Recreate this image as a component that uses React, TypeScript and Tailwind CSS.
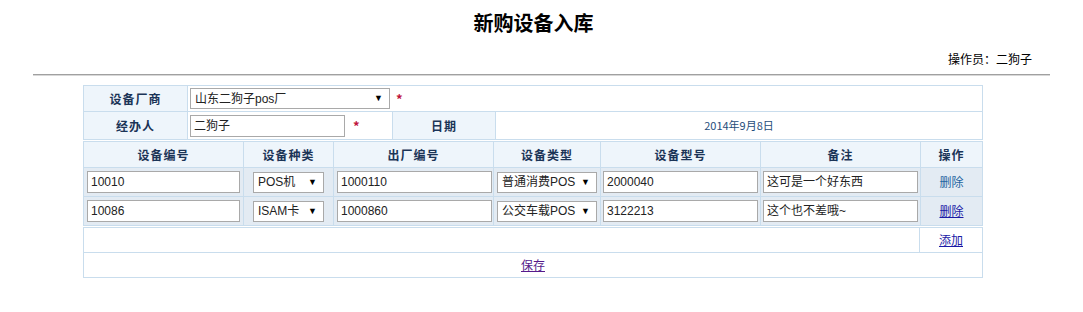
import React from "react";

const font = { fontFamily: '"Noto Sans CJK SC", "Liberation Sans", sans-serif' };
const inputFont = { fontFamily: '"Liberation Sans", "Noto Sans CJK SC", sans-serif' };

const rows = [
  { no: "10010", kind: "POS机", factory: "1000110", type: "普通消费POS", model: "2000040", note: "这可是一个好东西", visited: false },
  { no: "10086", kind: "ISAM卡", factory: "1000860", type: "公交车载POS", model: "3122213", note: "这个也不差哦~", visited: true },
];

function Caret() {
  return <span className="text-[9px] leading-none text-black">▼</span>;
}

function FakeSelect({ value, w }: { value: string; w: string }) {
  return (
    <div
      className={`${w} h-[21px] border border-[#a9a9a9] bg-white flex items-center justify-between pl-[4px] pr-[6px] text-[12px] text-[#222]`}
      style={inputFont}
    >
      <span>{value}</span>
      <Caret />
    </div>
  );
}

function Field({ value, w }: { value: string; w: string }) {
  return (
    <div
      className={`${w} h-[22px] border border-[#a9a9a9] bg-white flex items-center px-[3px] text-[12px] text-[#222]`}
      style={inputFont}
    >
      {value}
    </div>
  );
}

function Star() {
  return <span className="text-[#c0143c] text-[13px] font-bold leading-none">*</span>;
}

const th = "bg-[#eef5fb] flex items-center justify-center text-[12px] font-bold text-[#1b3457] tracking-[1px]";

export default function App() {
  return (
    <div className="w-[1083px] h-[312px] bg-white text-black" style={font}>
      <div className="pt-[9px] pr-[16px] text-center text-[20px] font-bold leading-[28px]">新购设备入库</div>
      <div className="mt-[14px] pr-[51px] text-right text-[12px] leading-[16px]">操作员：二狗子</div>
      <div className="mx-[33px] mt-[7px] h-[2px] bg-[#a0a0a0] border-b border-[#d8d8d8]" />

      <div className="mx-[83px] mt-[9px] w-[900px]">
        {/* top info */}
        <div className="grid grid-cols-[103px_204px_102px_1fr] gap-px bg-[#c9dded] border border-[#c9dded]">
          <div className={`${th} h-[25px]`}>设备厂商</div>
          <div className="col-span-3 bg-white flex items-center pl-[2px] gap-[6px]">
            <FakeSelect value="山东二狗子pos厂" w="w-[200px]" />
            <Star />
          </div>
          <div className={`${th} h-[27px]`}>经办人</div>
          <div className="bg-white flex items-center pl-[2px] gap-[8px]">
            <Field value="二狗子" w="w-[155px]" />
            <Star />
          </div>
          <div className={th}>日期</div>
          <div className="bg-white flex items-center justify-center text-[11px] text-[#1f4d7a]">2014年9月8日</div>
        </div>

        {/* list */}
        <div className="mt-px grid grid-cols-[159px_89px_159px_106px_159px_159px_1fr] gap-px bg-[#c9dded] border border-[#c9dded]">
          {["设备编号", "设备种类", "出厂编号", "设备类型", "设备型号", "备注", "操作"].map((h) => (
            <div key={h} className={`${th} h-[25px]`}>{h}</div>
          ))}
          {rows.map((r) => (
            <React.Fragment key={r.no}>
              <div className="bg-[#e3ebf3] h-[28px] flex items-center pl-[3px]"><Field value={r.no} w="w-[153px]" /></div>
              <div className="bg-[#e3ebf3] flex items-center pl-[9px]"><FakeSelect value={r.kind} w="w-[71px]" /></div>
              <div className="bg-[#e3ebf3] flex items-center pl-[3px]"><Field value={r.factory} w="w-[155px]" /></div>
              <div className="bg-[#e3ebf3] flex items-center pl-[3px]"><FakeSelect value={r.type} w="w-[100px]" /></div>
              <div className="bg-[#e3ebf3] flex items-center pl-[2px]"><Field value={r.model} w="w-[155px]" /></div>
              <div className="bg-[#e3ebf3] flex items-center pl-[2px]"><Field value={r.note} w="w-[155px]" /></div>
              <div className="bg-[#e3ebf3] flex items-center justify-center text-[12px]">
                {r.visited ? (
                  <a className="underline text-[#1a1aa6]">删除</a>
                ) : (
                  <a className="text-[#1f64a0]">删除</a>
                )}
              </div>
            </React.Fragment>
          ))}
        </div>

        {/* actions */}
        <div className="mt-px grid grid-cols-[1fr_62px] gap-px bg-[#c9dded] border border-[#c9dded]">
          <div className="bg-white h-[24px]" />
          <div className="bg-white flex items-center justify-center text-[12px]">
            <a className="underline text-[#1a1aa6]">添加</a>
          </div>
          <div className="col-span-2 bg-white h-[24px] flex items-center justify-center text-[12px]">
            <a className="underline text-[#551a8b]">保存</a>
          </div>
        </div>
      </div>
    </div>
  );
}
